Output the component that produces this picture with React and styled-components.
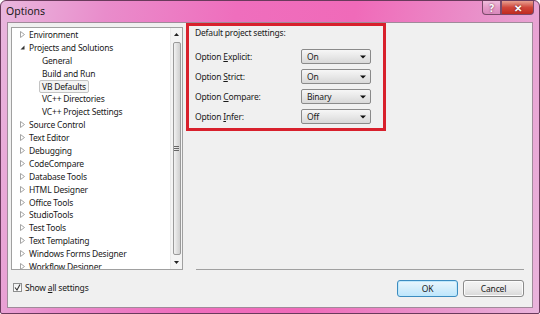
import React from "react";
import styled, { createGlobalStyle } from "styled-components";

const GlobalStyle = createGlobalStyle`
  html, body {
    margin: 0;
    padding: 0;
    width: 540px;
    height: 314px;
    overflow: hidden;
    background: #ffffff;
  }
  body {
    font-family: "Noto Sans", "Open Sans", sans-serif;
    font-size: 8.5px;
    letter-spacing: -0.2px;
    color: #1a1a1a;
  }
`;

const Window = styled.div`
  width: 540px;
  height: 314px;
  box-sizing: border-box;
  display: flex;
  flex-direction: column;
  border: 1px solid #6a3a5c;
  border-radius: 6px 6px 2px 2px;
  background: linear-gradient(
    100deg,
    #e9b7de 0%,
    #e98ccb 18%,
    #ef6ebd 40%,
    #f06ab9 60%,
    #e898cd 85%,
    #eab4dc 100%
  );
`;

const TitleBar = styled.div`
  height: 21px;
  display: flex;
  align-items: flex-start;
`;

const Title = styled.div`
  padding: 3px 0 0 5px;
  font-size: 10.5px;
  letter-spacing: 0;
  color: #1a1a1a;
`;

const Controls = styled.div`
  margin-left: auto;
  margin-right: 5px;
  display: flex;
`;

const CaptionButton = styled.div`
  width: ${(p) => p.$w}px;
  height: 14px;
  box-sizing: border-box;
  display: flex;
  align-items: center;
  justify-content: center;
  border: 1px solid #7a4a6a;
  border-top: none;
  color: #ffffff;
  font-size: 10px;
  font-weight: 700;
  background: ${(p) =>
    p.$close
      ? "linear-gradient(#e8a090, #d0463a 50%, #c02a20)"
      : "linear-gradient(#f0bcdc, #e49ac8 50%, #d888bc)"};
  border-radius: ${(p) => (p.$close ? "0 0 4px 0" : "0 0 0 4px")};
  text-shadow: 0 0 2px #5a2030;
`;

const Client = styled.div`
  flex: 1;
  margin: 0 6px 5px 6px;
  display: flex;
  background: #f0f0f0;
  border: 1px solid #a08a9a;
`;

const LeftColumn = styled.div`
  width: 172px;
  padding: 4px 0 0 3px;
  display: flex;
  flex-direction: column;
`;

const TreePanel = styled.div`
  height: 243px;
  box-sizing: border-box;
  display: flex;
  background: #ffffff;
  border: 1px solid #a0a0a0;
  overflow: hidden;
`;

const TreeList = styled.div`
  flex: 1;
`;

const TreeRow = styled.div`
  height: 12.9px;
  display: flex;
  align-items: center;
  padding-left: ${(p) => (p.$child ? 27 : 8)}px;
  white-space: nowrap;
`;

const Toggle = styled.span`
  width: 6px;
  display: flex;
  align-items: center;
`;

const TreeLabel = styled.span`
  padding: 0 2px;
  line-height: 11px;
  border: 1px solid ${(p) => (p.$selected ? "#c4c4c4" : "transparent")};
  border-radius: 2px;
  background: ${(p) => (p.$selected ? "#f4f4f4" : "transparent")};
`;

const ScrollBar = styled.div`
  width: 11px;
  display: flex;
  flex-direction: column;
  align-items: center;
  background: #f4f4f4;
  border-left: 1px solid #eaeaea;
`;

const ScrollArrow = styled.div`
  height: 13px;
  display: flex;
  align-items: center;
  justify-content: center;
`;

const Thumb = styled.div`
  flex: 1;
  width: 8px;
  margin: 1px 0;
  box-sizing: border-box;
  display: flex;
  align-items: center;
  justify-content: center;
  border: 1px solid #9a9a9a;
  border-radius: 2px;
  background: linear-gradient(90deg, #f2f2f2, #dcdcdc 60%, #d0d0d0);
`;

const CheckRow = styled.label`
  margin-top: 12px;
  margin-left: 2px;
  display: flex;
  align-items: center;
  gap: 3px;
`;

const CheckBox = styled.span`
  width: 9px;
  height: 9px;
  box-sizing: border-box;
  display: flex;
  align-items: center;
  justify-content: center;
  border: 1px solid #8e8f8f;
  background: linear-gradient(#f0f0f0, #ffffff);
`;

const RightColumn = styled.div`
  flex: 1;
  display: flex;
  flex-direction: column;
  padding: 0 8px 0 7px;
`;

const SettingsBox = styled.div`
  width: 200px;
  height: 108px;
  box-sizing: border-box;
  margin-left: -4px;
  padding: 1px 0 0 6px;
  border: 3px solid #d8202c;
  display: flex;
  flex-direction: column;
`;

const Heading = styled.div`
  height: 12px;
  line-height: 12px;
  margin-bottom: 10px;
`;

const OptionGrid = styled.div`
  display: grid;
  grid-template-columns: 106px 70px;
  row-gap: 5px;
  align-items: center;
`;

const Select = styled.div`
  height: 15px;
  box-sizing: border-box;
  display: flex;
  align-items: center;
  justify-content: space-between;
  padding: 0 4px 0 5px;
  border: 1px solid #8a8a8a;
  border-radius: 2px;
  background: linear-gradient(#f6f6f6, #e8e8e8 50%, #d8d8d8);
`;

const Spacer = styled.div`
  flex: 1;
`;

const Separator = styled.div`
  height: 1px;
  margin: 0 0 10px 6px;
  background: #a0a0a0;
`;

const ButtonRow = styled.div`
  display: flex;
  justify-content: flex-end;
  gap: 5px;
  margin-bottom: 10px;
`;

const Button = styled.div`
  width: 61px;
  height: 17px;
  box-sizing: border-box;
  display: flex;
  align-items: center;
  justify-content: center;
  border: 1px solid ${(p) => (p.$primary ? "#3c8cc0" : "#8a8a8a")};
  border-radius: 3px;
  background: ${(p) =>
    p.$primary
      ? "linear-gradient(#eaf6fd, #d4eefb 50%, #bee6fd)"
      : "linear-gradient(#f4f4f4, #ebebeb 50%, #d8d8d8)"};
  box-shadow: ${(p) => (p.$primary ? "inset 0 0 0 1px #bfe8fb" : "inset 0 0 0 1px #fcfcfc")};
`;

const Caret = () => (
  <svg width="6" height="4" viewBox="0 0 6 4">
    <path d="M0 0.5 L6 0.5 L3 3.5 Z" fill="#111" />
  </svg>
);

const Collapsed = () => (
  <svg width="5" height="7" viewBox="0 0 5 7">
    <path d="M0.5 0.5 L4.5 3.5 L0.5 6.5 Z" fill="none" stroke="#9a9a9a" strokeWidth="0.9" />
  </svg>
);

const Expanded = () => (
  <svg width="5" height="5" viewBox="0 0 5 5">
    <path d="M4.5 0.5 L4.5 4.5 L0.5 4.5 Z" fill="#333" />
  </svg>
);

const tree = [
  { label: "Environment" },
  { label: "Projects and Solutions", open: true },
  { label: "General", child: true },
  { label: "Build and Run", child: true },
  { label: "VB Defaults", child: true, selected: true },
  { label: "VC++ Directories", child: true },
  { label: "VC++ Project Settings", child: true },
  { label: "Source Control" },
  { label: "Text Editor" },
  { label: "Debugging" },
  { label: "CodeCompare" },
  { label: "Database Tools" },
  { label: "HTML Designer" },
  { label: "Office Tools" },
  { label: "StudioTools" },
  { label: "Test Tools" },
  { label: "Text Templating" },
  { label: "Windows Forms Designer" },
  { label: "Workflow Designer" },
];

const options = [
  { pre: "Option ", key: "E", rest: "xplicit:", value: "On" },
  { pre: "Option ", key: "S", rest: "trict:", value: "On" },
  { pre: "Option ", key: "C", rest: "ompare:", value: "Binary" },
  { pre: "Option ", key: "I", rest: "nfer:", value: "Off" },
];

export default function App() {
  return (
    <>
      <GlobalStyle />
      <Window>
        <TitleBar>
          <Title>Options</Title>
          <Controls>
            <CaptionButton $w={19}>?</CaptionButton>
            <CaptionButton $w={33} $close>
              ✕
            </CaptionButton>
          </Controls>
        </TitleBar>
        <Client>
          <LeftColumn>
            <TreePanel>
              <TreeList>
                {tree.map((item) => (
                  <TreeRow key={item.label} $child={item.child}>
                    {!item.child && (
                      <Toggle>{item.open ? <Expanded /> : <Collapsed />}</Toggle>
                    )}
                    <TreeLabel $selected={item.selected}>{item.label}</TreeLabel>
                  </TreeRow>
                ))}
              </TreeList>
              <ScrollBar>
                <ScrollArrow>
                  <svg width="5" height="3" viewBox="0 0 5 3">
                    <path d="M0 3 L5 3 L2.5 0 Z" fill="#222" />
                  </svg>
                </ScrollArrow>
                <Thumb>
                  <svg width="5" height="5" viewBox="0 0 5 5">
                    <path d="M0 0.5 H5 M0 2.5 H5 M0 4.5 H5" stroke="#666" strokeWidth="1" />
                  </svg>
                </Thumb>
                <ScrollArrow>
                  <svg width="5" height="3" viewBox="0 0 5 3">
                    <path d="M0 0 L5 0 L2.5 3 Z" fill="#222" />
                  </svg>
                </ScrollArrow>
              </ScrollBar>
            </TreePanel>
            <CheckRow>
              <CheckBox>
                <svg width="7" height="7" viewBox="0 0 7 7">
                  <path d="M1 3.5 L3 6 L6 0.5" fill="none" stroke="#333" strokeWidth="1.1" />
                </svg>
              </CheckBox>
              <span>
                Show <u>a</u>ll settings
              </span>
            </CheckRow>
          </LeftColumn>
          <RightColumn>
            <SettingsBox>
              <Heading>Default project settings:</Heading>
              <OptionGrid>
                {options.map((o) => (
                  <React.Fragment key={o.key}>
                    <span>
                      {o.pre}
                      <u>{o.key}</u>
                      {o.rest}
                    </span>
                    <Select>
                      <span>{o.value}</span>
                      <Caret />
                    </Select>
                  </React.Fragment>
                ))}
              </OptionGrid>
            </SettingsBox>
            <Spacer />
            <Separator />
            <ButtonRow>
              <Button $primary>OK</Button>
              <Button>Cancel</Button>
            </ButtonRow>
          </RightColumn>
        </Client>
      </Window>
    </>
  );
}
